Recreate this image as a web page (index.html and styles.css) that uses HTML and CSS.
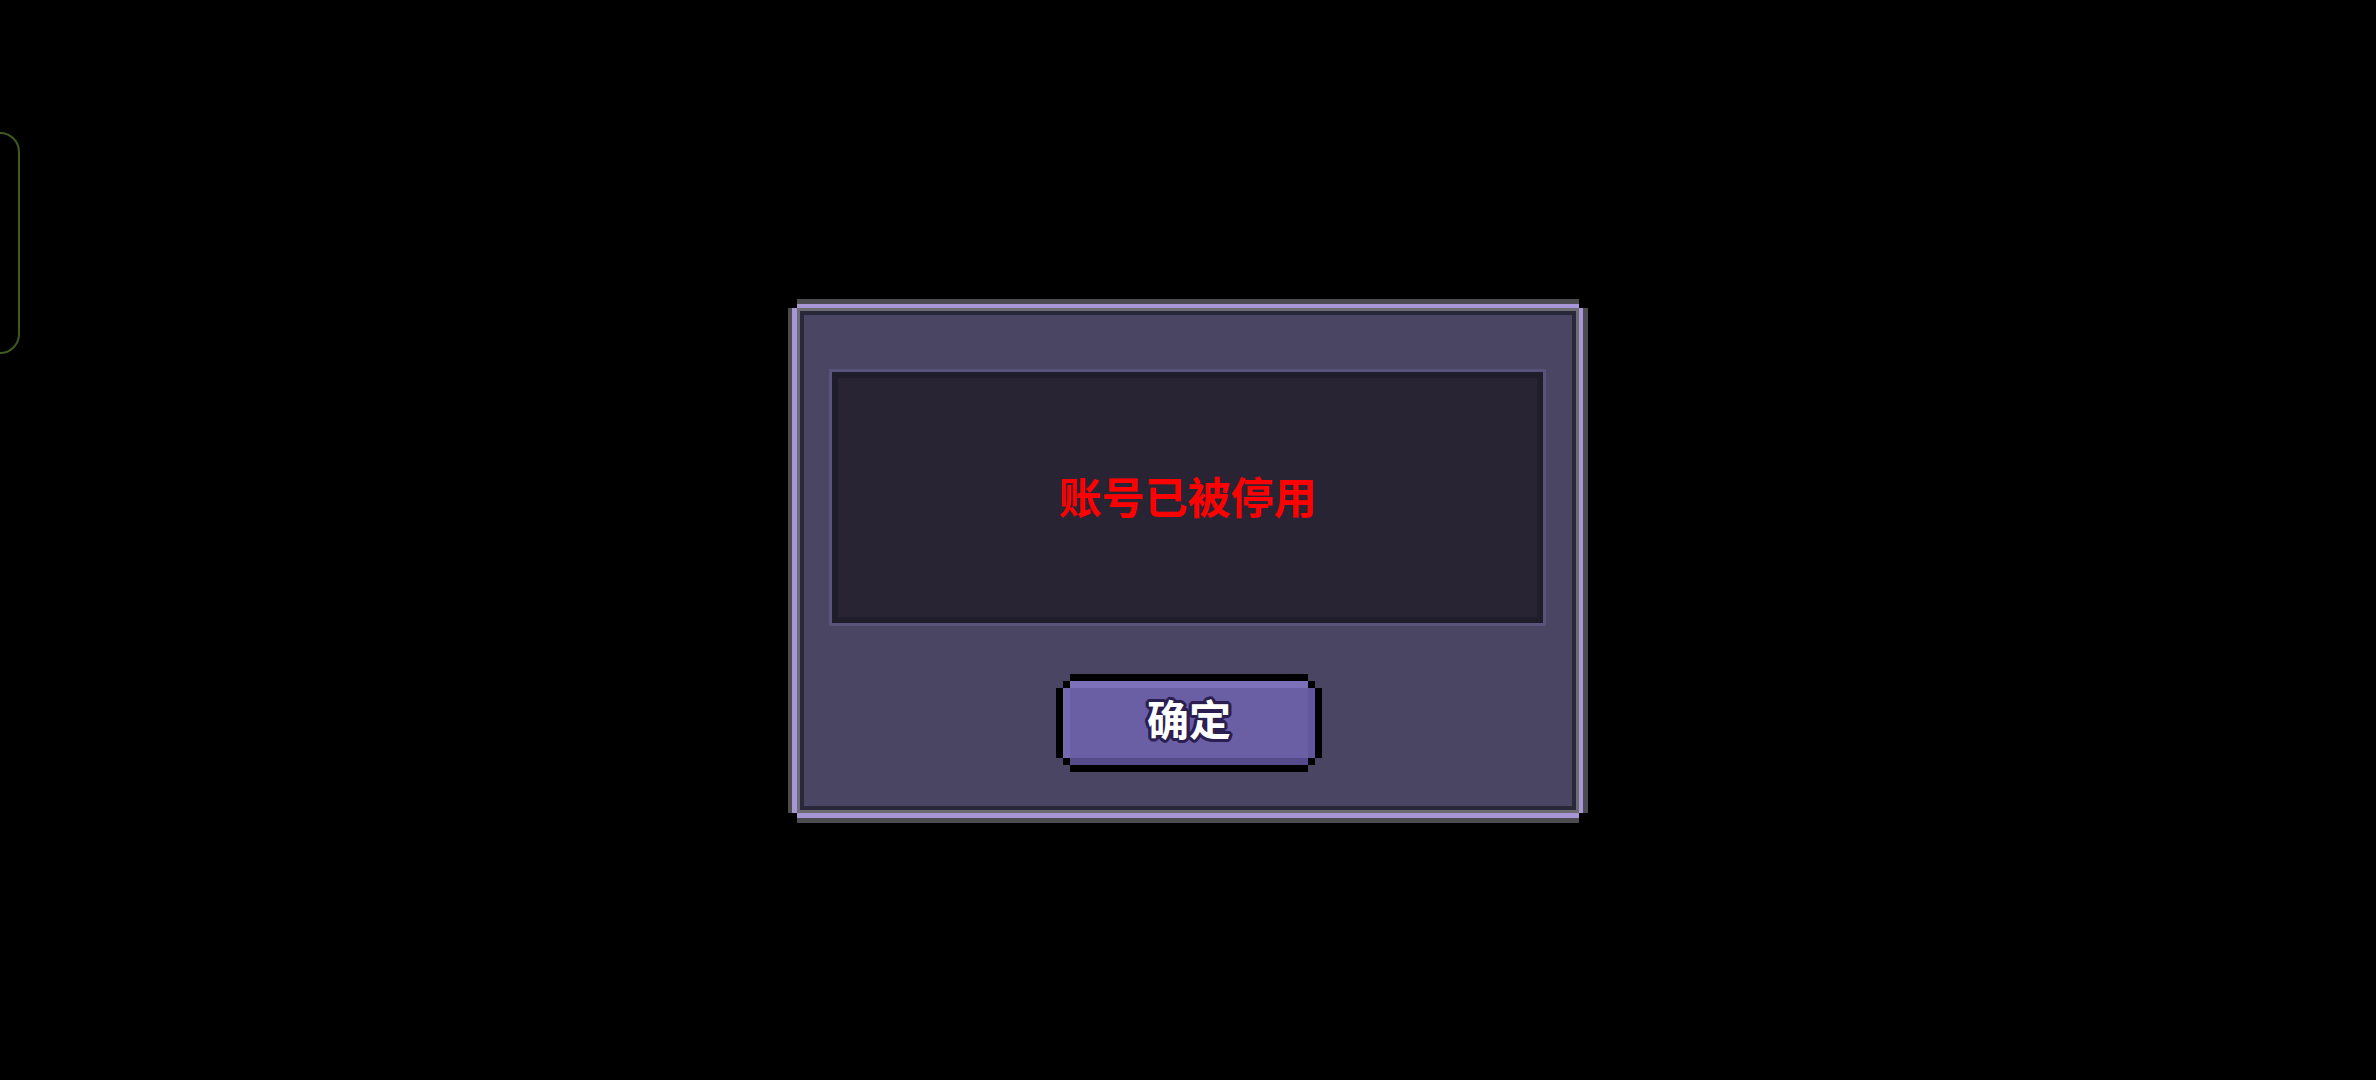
FILE: index.html
```html
<!DOCTYPE html>
<html lang="zh-CN">
<head>
<meta charset="utf-8">
<title>提示</title>
<link rel="stylesheet" href="styles.css">
</head>
<body>
<div class="side-handle"></div>
<main class="stage">
  <section class="dialog">
    <div class="message-panel">
      <p class="message">账号已被停用</p>
    </div>
    <button class="confirm" type="button">
      <span class="confirm-face"><span class="confirm-label">确定</span></span>
    </button>
  </section>
</main>
</body>
</html>
```
FILE: styles.css
```css
* { box-sizing: border-box; }

html, body {
  margin: 0;
  padding: 0;
  background: #000;
}

body {
  width: 2376px;
  height: 1080px;
  overflow: hidden;
  position: relative;
  font-family: "Noto Sans CJK SC", "Noto Sans", sans-serif;
}

.side-handle {
  position: absolute;
  left: -22px;
  top: 132px;
  width: 42px;
  height: 222px;
  border: 2px solid #3d5a1f;
  border-radius: 20px;
}

.stage {
  height: 1080px;
  padding-top: 41px;
  display: flex;
  align-items: center;
  justify-content: center;
}

.dialog {
  width: 782px;
  height: 505px;
  background: #4a4563;
  border: 3px solid #6c6b72;
  padding: 58px 0 38px;
  display: flex;
  flex-direction: column;
  align-items: center;
  gap: 48px;
  box-shadow:
    inset 0 0 0 4px #29273a,
    0 -4px 0 #a696d6,
    0 5px 0 #a696d6,
    -5px 0 0 #a696d6,
    4px 0 0 #a696d6,
    0 -9px 0 #4b4b50,
    0 10px 0 #4b4b50,
    -9px 0 0 #4b4b50,
    9px 0 0 #4b4b50;
}

.message-panel {
  width: 717px;
  height: 257px;
  margin-right: 1px;
  background: #282433;
  border: 3px solid #58537a;
  box-shadow: inset 0 0 0 6px #201d2a;
  display: flex;
  align-items: center;
  justify-content: center;
  padding-bottom: 5px;
}

.message {
  margin: 0;
  color: #ff0000;
  font-size: 43px;
  font-weight: 700;
  line-height: 1;
  letter-spacing: 0;
}

.confirm {
  width: 266px;
  height: 98px;
  padding: 7px;
  margin: 0 0 0 2px;
  border: 0;
  background: #000;
  cursor: pointer;
  clip-path: polygon(14px 0, 252px 0, 252px 7px, 259px 7px, 259px 14px, 266px 14px,
    266px 84px, 259px 84px, 259px 91px, 252px 91px, 252px 98px, 14px 98px,
    14px 91px, 7px 91px, 7px 84px, 0 84px, 0 14px, 7px 14px, 7px 7px, 14px 7px);
  font-family: inherit;
}

.confirm-face {
  display: flex;
  width: 252px;
  height: 84px;
  align-items: center;
  justify-content: center;
  padding-bottom: 10px;
  background: #6a5fa5;
  box-shadow:
    inset 0 7px 0 #7c71b9,
    inset 0 -7px 0 #564b8a,
    inset 7px 0 0 #7369b0,
    inset -7px 0 0 #61579a;
  clip-path: polygon(7px 0, 245px 0, 245px 7px, 252px 7px, 252px 77px, 245px 77px,
    245px 84px, 7px 84px, 7px 77px, 0 77px, 0 7px, 7px 7px);
}

.confirm-label {
  color: #fff;
  font-size: 42px;
  font-weight: 700;
  line-height: 1;
  text-shadow:
    3px 0 0 #2b1f52, -3px 0 0 #2b1f52, 0 3px 0 #2b1f52, 0 -3px 0 #2b1f52,
    2px 2px 0 #2b1f52, -2px 2px 0 #2b1f52, 2px -2px 0 #2b1f52, -2px -2px 0 #2b1f52,
    3px 1px 0 #2b1f52, -3px 1px 0 #2b1f52, 1px 3px 0 #2b1f52, -1px 3px 0 #2b1f52,
    3px -1px 0 #2b1f52, -3px -1px 0 #2b1f52, 1px -3px 0 #2b1f52, -1px -3px 0 #2b1f52;
}
```
